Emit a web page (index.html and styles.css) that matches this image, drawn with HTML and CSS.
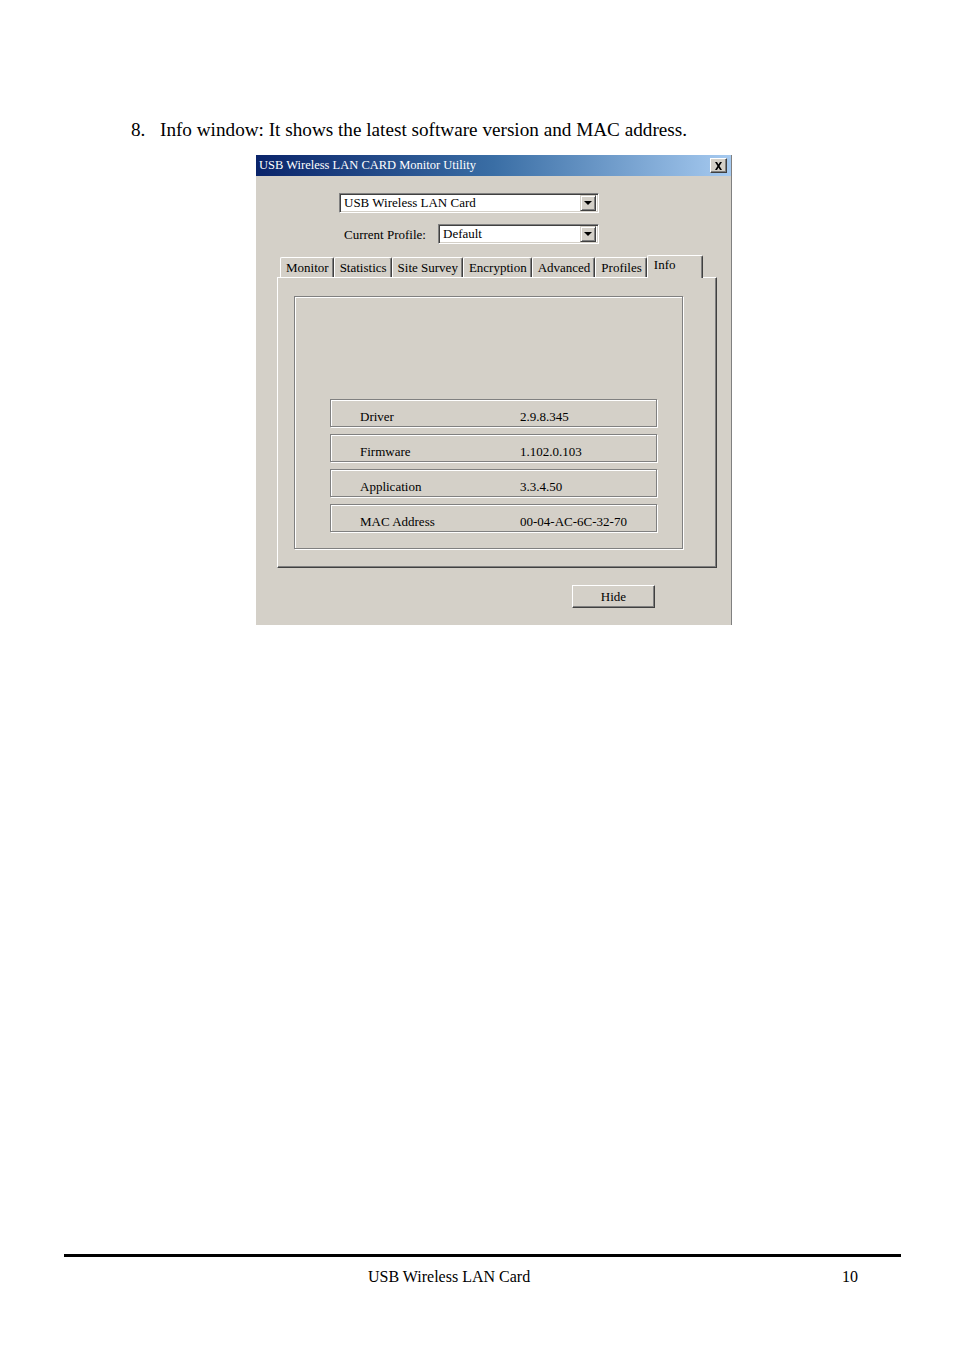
FILE: index.html
```html
<!DOCTYPE html>
<html>
<head>
<meta charset="utf-8">
<link rel="stylesheet" href="styles.css">
</head>
<body>
<div class="page">
  <p class="step"><span class="num">8.</span>Info window: It shows the latest software version and MAC address.</p>

  <div class="window">
    <div class="titlebar">
      <span class="title">USB Wireless LAN CARD Monitor Utility</span>
      <span class="close">
        <svg width="9" height="8" viewBox="0 0 9 8"><path d="M1 0h2l1.5 2.5L6 0h2L5.5 4 8 8H6L4.5 5.5 3 8H1l2.5-4z" fill="#000"/></svg>
      </span>
    </div>
    <div class="wbody">
      <div class="row row-card">
        <div class="combo combo-card">
          <span class="combo-text">USB Wireless LAN Card</span>
          <span class="drop"><span class="tri"></span></span>
        </div>
      </div>
      <div class="row row-profile">
        <span class="label">Current Profile:</span>
        <div class="combo combo-profile">
          <span class="combo-text">Default</span>
          <span class="drop"><span class="tri"></span></span>
        </div>
      </div>

      <div class="tabs">
        <span class="tab">Monitor</span>
        <span class="tab">Statistics</span>
        <span class="tab">Site Survey</span>
        <span class="tab">Encryption</span>
        <span class="tab">Advanced</span>
        <span class="tab">Profiles</span>
        <span class="tab tab-active">Info</span>
      </div>
      <div class="panel">
        <div class="group">
          <div class="info-list">
            <div class="info-row"><span class="info-key">Driver</span><span class="info-val">2.9.8.345</span></div>
            <div class="info-row"><span class="info-key">Firmware</span><span class="info-val">1.102.0.103</span></div>
            <div class="info-row"><span class="info-key">Application</span><span class="info-val">3.3.4.50</span></div>
            <div class="info-row"><span class="info-key">MAC Address</span><span class="info-val">00-04-AC-6C-32-70</span></div>
          </div>
        </div>
      </div>
      <div class="btn-row">
        <span class="btn">Hide</span>
      </div>
    </div>
  </div>

  <footer class="footer">
    <div class="rule"></div>
    <div class="foot-text">
      <span class="foot-title">USB Wireless LAN Card</span>
      <span class="foot-page">10</span>
    </div>
  </footer>
</div>
</body>
</html>
```

FILE: styles.css
```css
* { box-sizing: border-box; }

html, body {
  margin: 0;
  padding: 0;
  background: #ffffff;
}

.page {
  width: 954px;
  height: 1351px;
  display: flex;
  flex-direction: column;
  font-family: "Liberation Serif", "Times New Roman", serif;
  color: #000;
}

.step {
  margin: 119px 0 0 0;
  padding-left: 131px;
  font-size: 19.2px;
  line-height: 21px;
}

.num {
  display: inline-block;
  width: 29px;
}

/* ---------- window ---------- */
.window {
  margin: 15px 0 0 256px;
  width: 476px;
  height: 470px;
  background: #d4d0c8;
  border-right: 1px solid #808080;
  font-family: "Liberation Serif", "Times New Roman", serif;
  font-size: 13px;
  color: #000;
  display: flex;
  flex-direction: column;
}

.titlebar {
  height: 21px;
  background: linear-gradient(to right, #0a246a 0%, #3a6ea5 50%, #a6caf0 100%);
  display: flex;
  align-items: center;
  justify-content: space-between;
  padding: 0 4px 0 3px;
}

.title {
  color: #ffffff;
  font-size: 12.5px;
  line-height: 15px;
}

.close {
  width: 17px;
  height: 15px;
  background: #d4d0c8;
  border-top: 1px solid #ffffff;
  border-left: 1px solid #ffffff;
  border-right: 1px solid #404040;
  border-bottom: 1px solid #404040;
  box-shadow: inset -1px -1px 0 #808080;
  display: flex;
  align-items: center;
  justify-content: center;
}

.wbody {
  flex: 1;
  display: flex;
  flex-direction: column;
}

.row {
  display: flex;
  align-items: center;
}

.row-card {
  margin-top: 17px;
  padding-left: 83px;
}

.row-profile {
  margin-top: 11px;
  padding-left: 88px;
  height: 20px;
}

.label {
  width: 94px;
  height: 20px;
  line-height: 18px;
  padding-top: 2px;
}

.combo {
  height: 20px;
  background: #ffffff;
  border-top: 1px solid #808080;
  border-left: 1px solid #808080;
  border-right: 1px solid #ffffff;
  border-bottom: 1px solid #ffffff;
  box-shadow: inset 1px 1px 0 #404040, inset -1px -1px 0 #d4d0c8;
  display: flex;
  align-items: center;
  justify-content: space-between;
  padding: 2px;
}

.combo-card { width: 260px; }
.combo-profile { width: 161px; }

.combo-text {
  padding-left: 2px;
  line-height: 16px;
}

.drop {
  width: 16px;
  height: 16px;
  background: #d4d0c8;
  border-top: 1px solid #d4d0c8;
  border-left: 1px solid #d4d0c8;
  border-right: 1px solid #404040;
  border-bottom: 1px solid #404040;
  box-shadow: inset 1px 1px 0 #ffffff, inset -1px -1px 0 #808080;
  display: flex;
  align-items: center;
  justify-content: center;
}

.tri {
  width: 0;
  height: 0;
  border-left: 4px solid transparent;
  border-right: 4px solid transparent;
  border-top: 4px solid #000;
}

/* ---------- tabs ---------- */
.tabs {
  margin-top: 11px;
  padding-left: 24px;
  height: 22px;
  display: flex;
  align-items: flex-end;
  position: relative;
  z-index: 1;
}

.tab {
  height: 20px;
  padding: 1px 4px 0 5px;
  line-height: 18px;
  border-top: 1px solid #ffffff;
  border-left: 1px solid #ffffff;
  border-right: 1px solid #404040;
  border-radius: 2px 2px 0 0;
  box-shadow: inset -1px 0 0 #808080;
  white-space: nowrap;
  overflow: hidden;
}

.tab-active {
  height: 23px;
  width: 56px;
  margin-bottom: -1px;
  padding: 0 0 0 6px;
  background: #d4d0c8;
  line-height: 18px;
}

.panel {
  margin-left: 21px;
  width: 440px;
  height: 291px;
  border-top: 1px solid #ffffff;
  border-left: 1px solid #ffffff;
  border-right: 1px solid #404040;
  border-bottom: 1px solid #404040;
  box-shadow: inset -1px -1px 0 #808080;
  padding: 18px 0 0 16px;
}

.group {
  width: 389px;
  height: 253px;
  border: 1px solid #808080;
  box-shadow: inset 1px 1px 0 #ffffff, 1px 1px 0 #ffffff;
  padding: 102px 0 0 35px;
}

.info-list {
  display: flex;
  flex-direction: column;
  gap: 7px;
}

.info-row {
  width: 327px;
  height: 28px;
  border: 1px solid #808080;
  box-shadow: inset 1px 1px 0 #ffffff, 1px 1px 0 #ffffff;
  display: flex;
  align-items: center;
  padding: 7px 0 0 29px;
}

.info-key {
  width: 160px;
}

/* ---------- button ---------- */
.btn-row {
  margin-top: 17px;
  padding-left: 316px;
}

.btn {
  display: flex;
  align-items: center;
  justify-content: center;
  width: 83px;
  height: 23px;
  background: #d4d0c8;
  border-top: 1px solid #ffffff;
  border-left: 1px solid #ffffff;
  border-right: 1px solid #404040;
  border-bottom: 1px solid #404040;
  box-shadow: inset -1px -1px 0 #808080;
}

/* ---------- footer ---------- */
.footer {
  margin-top: auto;
  padding: 0 53px 65px 64px;
}

.rule {
  height: 3px;
  background: #000;
}

.foot-text {
  margin-top: 11px;
  display: flex;
  font-size: 16px;
  line-height: 18px;
  padding-left: 304px;
  padding-right: 43px;
}

.foot-page {
  margin-left: auto;
}
```
